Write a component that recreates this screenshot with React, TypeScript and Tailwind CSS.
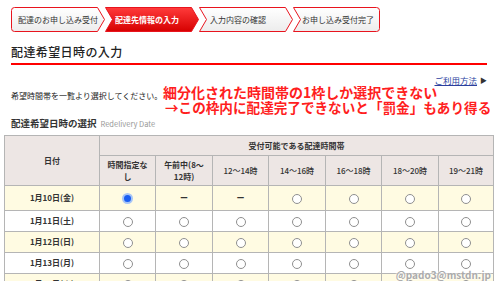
import React from 'react';

const font = { fontFamily: '"Noto Sans CJK JP", "Noto Sans", sans-serif' };

type StepKind = 'first' | 'middle' | 'last';

// step shapes of the progress bar
const shapes: Record<StepKind, (w: number) => string> = {
  first: (w) =>
    `M3.5,0.5 H${w - 7.5} L${w - 0.5},12.5 L${w - 7.5},24.5 H3.5 Q0.5,24.5 0.5,21.5 V3.5 Q0.5,0.5 3.5,0.5 Z`,
  middle: (w) => `M0.5,0.5 H${w - 7.5} L${w - 0.5},12.5 L${w - 7.5},24.5 H0.5 L7.5,12.5 Z`,
  last: (w) =>
    `M0.5,0.5 H${w - 3.5} Q${w - 0.5},0.5 ${w - 0.5},3.5 V21.5 Q${w - 0.5},24.5 ${w - 3.5},24.5 H0.5 L7.5,12.5 Z`,
};

const Step: React.FC<{ label: string; kind: StepKind; width: number; pad: number; active?: boolean; id: string }> = ({
  label,
  kind,
  width,
  pad,
  active,
  id,
}) => (
  <div className="relative h-[25px] shrink-0" style={{ width }}>
    <svg width={width} height={25} className="absolute inset-0">
      <defs>
        <linearGradient id={id} x1="0" y1="0" x2="0" y2="1">
          {active ? (
            <>
              <stop offset="0" stopColor="#ff3b3b" />
              <stop offset="1" stopColor="#d60000" />
            </>
          ) : (
            <>
              <stop offset="0" stopColor="#ffffff" />
              <stop offset="1" stopColor="#ececec" />
            </>
          )}
        </linearGradient>
      </defs>
      <path d={shapes[kind](width)} fill={`url(#${id})`} stroke="#e8141e" strokeWidth="1" />
    </svg>
    <div
      className={`relative flex h-full items-center whitespace-nowrap text-[8px] ${
        active ? 'font-bold text-white' : 'text-[#333]'
      }`}
      style={{ paddingLeft: pad }}
    >
      {label}
    </div>
  </div>
);

const Radio: React.FC<{ checked?: boolean }> = ({ checked }) =>
  checked ? (
    <span className="inline-block h-[11px] w-[11px] rounded-full border-2 border-[#a7c5f7] bg-[#1a5ef2] align-middle" />
  ) : (
    <span className="inline-block h-[10px] w-[10px] rounded-full border border-[#8f8f8f] bg-white align-middle" />
  );

const slots = ['12～14時', '14～16時', '16～18時', '18～20時', '19～21時'];
const days = ['1月10日(金)', '1月11日(土)', '1月12日(日)', '1月13日(月)', '1月14日(火)'];

const cell = 'border border-[#b5b5b5] text-center';

export default function App() {
  return (
    <div className="relative h-[281px] w-[500px] overflow-hidden bg-white text-[#222]" style={font}>
      {/* progress steps */}
      <div className="ml-[11px] mt-[7px] flex">
        <Step id="s1" kind="first" width={94} pad={7} label="配達のお申し込み受付" />
        <Step id="s2" kind="middle" width={94} pad={10} label="配達先情報の入力" active />
        <Step id="s3" kind="middle" width={94} pad={11} label="入力内容の確認" />
        <Step id="s4" kind="last" width={87} pad={9} label="お申し込み受付完了" />
      </div>

      <h1 className="ml-[11px] mt-[12px] h-[16px] text-[12px] font-medium leading-[16px] tracking-[0.4px] text-[#222]">
        配達希望日時の入力
      </h1>
      <div className="ml-[11px] mt-[3px] h-[2px] w-[476px] bg-[#f00]" />

      <div className="mr-[13px] mt-[9px] flex h-[12px] items-center justify-end text-[8.5px] leading-[12px]">
        <span className="text-[#2b3f9e] underline">ご利用方法</span>
        <span className="ml-[3px] text-[7px] text-[#333]">▶</span>
      </div>

      <p className="ml-[11px] mt-[4px] h-[12px] text-[8px] leading-[12px]">希望時間帯を一覧より選択してください。</p>

      <div className="ml-[11px] mt-[14px] flex h-[14px] items-baseline leading-[14px]">
        <span className="text-[9.5px] font-bold text-[#333]">配達希望日時の選択</span>
        <span className="ml-[4px] text-[7.5px] text-[#999]">Redelivery Date</span>
      </div>

      {/* date / time slot table */}
      <table className="ml-[4px] mt-[5px] w-[489px] table-fixed border-collapse text-[8px] text-[#333]">
        <colgroup>
          <col className="w-[95px]" />
          <col className="w-[56px]" />
          <col className="w-[57px]" />
          <col className="w-[56px]" />
          <col className="w-[57px]" />
          <col className="w-[56px]" />
          <col className="w-[57px]" />
          <col className="w-[55px]" />
        </colgroup>
        <thead className="bg-[#ede6e4] font-bold">
          <tr className="h-[20px]">
            <th rowSpan={2} className={cell}>
              日付
            </th>
            <th colSpan={7} className={cell}>
              受付可能である配達時間帯
            </th>
          </tr>
          <tr className="h-[30px] leading-[12px]">
            <th className={cell}>
              時間指定な
              <br />し
            </th>
            <th className={cell}>
              午前中(8～
              <br />
              12時)
            </th>
            {slots.map((s) => (
              <th key={s} className={`${cell} font-medium`}>
                {s}
              </th>
            ))}
          </tr>
        </thead>
        <tbody>
          {days.map((d, i) => (
            <tr key={d} className={`${i === 0 ? 'h-[25px]' : 'h-[21px]'} ${i % 2 === 0 ? 'bg-[#fffbe2]' : 'bg-white'}`}>
              <td className={`${cell} font-bold`}>{d}</td>
              <td className={cell}>
                <Radio checked={i === 0} />
              </td>
              <td className={cell}>{i === 0 ? <span className="font-bold">ー</span> : <Radio />}</td>
              <td className={cell}>{i === 0 ? <span className="font-bold">ー</span> : <Radio />}</td>
              {slots.slice(1).map((s) => (
                <td key={s} className={cell}>
                  <Radio />
                </td>
              ))}
            </tr>
          ))}
        </tbody>
      </table>

      {/* annotation laid over the page */}
      <div className="absolute left-[163px] top-[85px] whitespace-nowrap text-[14px] font-bold leading-[15px] text-[#ff1e1e]">
        <div>細分化された時間帯の1枠しか選択できない</div>
        <div className="ml-[2px] text-[13.6px]">→この枠内に配達完了できないと「罰金」もあり得る</div>
      </div>

      <div className="absolute bottom-[-1px] right-[9px] text-[10px] font-bold text-[#ababab] [text-shadow:0_0_2px_#fff,0_0_2px_#fff]">
        @pado3@mstdn.jp
      </div>
    </div>
  );
}
